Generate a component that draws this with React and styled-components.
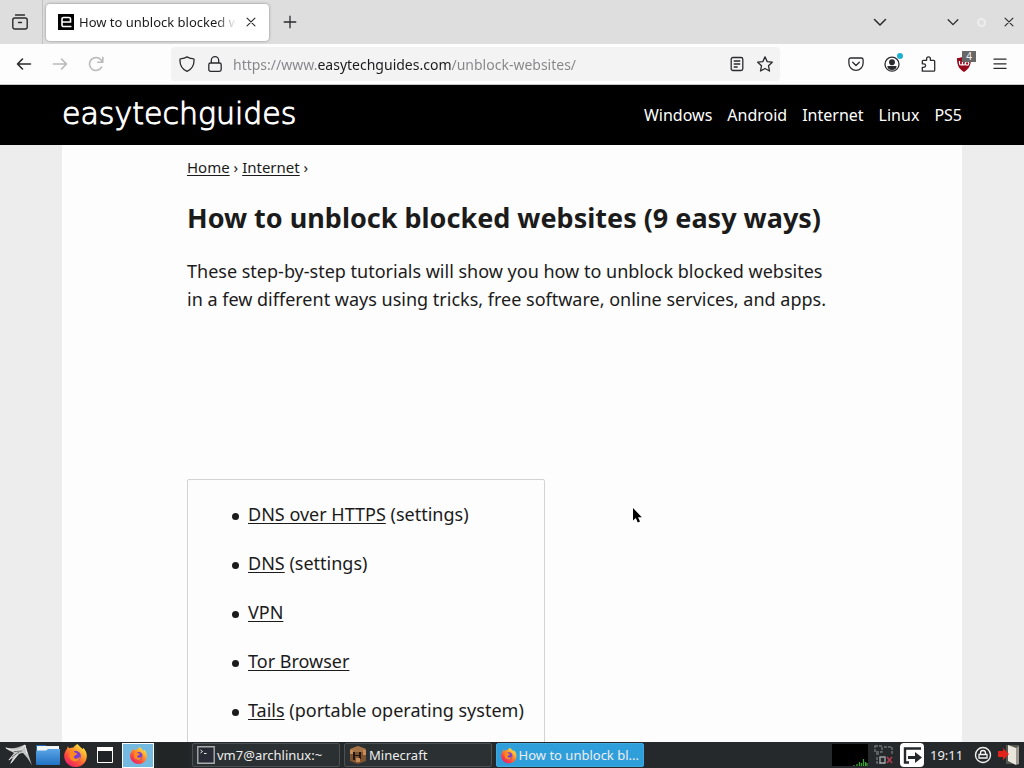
import styled, { createGlobalStyle, css } from "styled-components";

const GlobalStyle = createGlobalStyle`
  *, *::before, *::after {
    box-sizing: border-box;
  }

  body {
    margin: 0;
    overflow: hidden;
    font-family: "Noto Sans", sans-serif;
    color: #1b1b1b;
    background: #fdfdfd;
  }

  button, input {
    font-family: inherit;
    color: inherit;
  }
`;

const navLinks = ["Windows", "Android", "Internet", "Linux", "PS5"];

const guides = [
  { name: "DNS over HTTPS", note: "(settings)" },
  { name: "DNS", note: "(settings)" },
  { name: "VPN" },
  { name: "Tor Browser" },
  { name: "Tails", note: "(portable operating system)" },
];

/* ---------- icons ---------- */

const Line = ({ size = 16, width = 1.3, children }) => (
  <svg
    width={size}
    height={size}
    viewBox="0 0 16 16"
    fill="none"
    stroke="currentColor"
    strokeWidth={width}
    strokeLinecap="round"
    strokeLinejoin="round"
    aria-hidden="true"
  >
    {children}
  </svg>
);

const ViewIcon = () => (
  <Line width={1.4}>
    <path d="M3.5 1h9" />
    <path d="M2.8 4h10.4c1.200 0 2 .8 2 2v7c0 1.200-.8 2-2 2H2.800c-1.200 0-2-.8-2-2V6c0-1.200.8-2 2-2zM6.500 8.500h3" />
  </Line>
);
const CloseIcon = ({ size = 14 }) => (
  <Line size={size}>
    <path d="M3.500 3.500l9 9M12.500 3.500l-9 9" />
  </Line>
);
const PlusIcon = () => (
  <Line>
    <path d="M8 2.200v11.600M2.200 8h11.600" />
  </Line>
);
const ChevronIcon = ({ size = 16 }) => (
  <Line size={size} width={1.5}>
    <path d="M2.500 5.500L8 11l5.500-5.500" />
  </Line>
);
const BackIcon = () => (
  <Line width={1.6}>
    <path d="M14.500 8h-13M6.500 3l-5 5 5 5" />
  </Line>
);
const ForwardIcon = () => (
  <Line width={1.6}>
    <path d="M1.500 8h13M9.500 3l5 5-5 5" />
  </Line>
);
const ReloadIcon = () => (
  <Line width={1.6}>
    <path d="M13.600 11.200A6.500 6.500 0 1 1 13.200 4.100L14.500 5.800M14.800 1.200v5H9.800" />
  </Line>
);
const ShieldIcon = () => (
  <Line>
    <path d="M8 .9C6 2.200 3.700 2.600 1.500 2.900 1 3 .9 3.300.9 3.700c0 5.200 2 9.500 7.100 11.600 5.100-2.100 7.100-6.400 7.100-11.600 0-.4-.1-.7-.6-.8C12.300 2.600 10 2.200 8 .9z" />
  </Line>
);
const LockIcon = () => (
  <Line>
    <path d="M4.300 7V4.400a3.700 3.700 0 0 1 7.400 0V7M3.600 7h8.800c1 0 1.800.8 1.800 1.800v4.700c0 1-.8 1.800-1.800 1.800H3.600c-1 0-1.800-.8-1.800-1.800V8.800C1.800 7.800 2.600 7 3.600 7z" />
  </Line>
);
const ReaderIcon = () => (
  <Line>
    <rect x="2.200" y="1.500" width="11.600" height="13" rx="1.800" />
    <path d="M5.200 5h5.600M5.200 8h5.600M5.200 11h3" />
  </Line>
);
const StarIcon = () => (
  <Line>
    <path d="M8 .9l2.200 4.700 5.100.6-3.800 3.600 1 5.200L8 12.500 3.500 15l1-5.200L.7 6.200l5.100-.6z" />
  </Line>
);
const PocketIcon = () => (
  <Line>
    <path d="M2.700 2h10.600c1 0 1.800.8 1.800 1.800v3.400a7.100 7.100 0 0 1-14.200 0V3.800C.9 2.800 1.700 2 2.700 2zM4.700 6.300L8 9.500l3.300-3.200" />
  </Line>
);
const AccountIcon = () => (
  <Line>
    <circle cx="8" cy="8.200" r="7" />
    <circle cx="8" cy="6.300" r="2.300" fill="currentColor" />
    <path d="M4 10.600h8c-.4 1.600-2 2.700-4 2.700s-3.600-1.100-4-2.700z" fill="currentColor" />
  </Line>
);
const PuzzleIcon = () => (
  <Line>
    <path d="M2.300 15.200V11.400h1.500a1.800 1.800 0 0 0 0-3.600H2.300V5.300c0-.6.400-1 1-1h3.300V2.800a1.900 1.900 0 0 1 3.800 0v1.500h3.300c.6 0 1 .4 1 1v8.900c0 .6-.4 1-1 1H2.300z" />
  </Line>
);
const UblockIcon = () => (
  <svg width="16" height="16" viewBox="0 0 16 16" aria-hidden="true">
    <path d="M8 0C6 1.500 3.500 2 1 2c0 7 1.500 10.500 7 14 5.500-3.500 7-7 7-14-2.500 0-5-.5-7-2z" fill="#960a1c" />
    <path d="M3.500 5v2.500c0 2 3 2 3 0V5v2.500c0 2 3 2 3 0V5" fill="none" stroke="#fff" strokeWidth="1.200" />
    <circle cx="11" cy="7.400" r="1.800" fill="none" stroke="#fff" strokeWidth="1.200" />
  </svg>
);
const MenuIcon = () => (
  <Line>
    <path d="M2 3.200h12M2 7.800h12M2 12.400h12" />
  </Line>
);
const SiteIcon = () => (
  <svg width="16" height="16" viewBox="0 0 16 16" aria-hidden="true">
    <path d="M0 0h16v16H0z" fill="#000" />
    <path d="M13.500 12.500H5.500a1.500 1.500 0 0 1-1.500-1.500V5a1.500 1.500 0 0 1 1.500-1.500h5.500A1.500 1.500 0 0 1 12.500 5V8H4" fill="none" stroke="#fff" strokeWidth="1.600" />
  </svg>
);

const FirefoxIcon = ({ size }) => (
  <svg width={size} height={size} viewBox="0 0 24 24" aria-hidden="true">
    <defs>
      <linearGradient id="fox" x1="0.850" y1="0.100" x2="0.200" y2="0.950">
        <stop offset="0" stopColor="#ffe543" />
        <stop offset="0.350" stopColor="#ff9a2a" />
        <stop offset="0.700" stopColor="#ff4a3c" />
        <stop offset="1" stopColor="#e6216e" />
      </linearGradient>
    </defs>
    <path
      d="M14 0c1.500 2 4 3.500 5.500 5.500l.5-1.500c2.500 2.500 4 5.500 3.800 9C23.500 19.500 18.500 24 12 24S.3 19 .2 12.800C.1 9.500 1.500 7 3.200 5l.5-2.500 2 2C7 3.800 8.500 3.500 10 3.600 11 2 12.500.8 14 0z"
      fill="url(#fox)"
    />
    <circle cx="12" cy="12.600" r="5.600" fill="#7a3fd0" />
    <path d="M6 7c2-.8 4-.3 5 1.500 1 .8 2.500.8 3 1.500-.5 1.500-2.500 1.500-3.500 2.700-.8 1.500.5 3 3 2.500 2-.4 3-1.500 3.500-3-.2 4-3 6.300-6 6-4-.4-6.500-4-5-8.200z" fill="#ff8a1f" />
  </svg>
);
const LauncherIcon = () => (
  <svg width="30" height="24" viewBox="0 0 30 24" aria-hidden="true">
    <path d="M1 4.500C9 6 14 5 21 1.500c2 6 4.500 13 7 21-2.500-5-5.500-9-9-12.500-3 0-5 1.500-6.500 4L6 21.500l3-7.500-5 3.500 6-7.500C7 8.500 4 7 1 4.500z" fill="#c3c5c5" />
    <path d="M2 5c5 2.500 10 3 15 1.500L21 2l2 9M5 17l9-7.500M7 20l7-9" fill="none" stroke="#f0f0f0" strokeWidth="1" />
    <path d="M8 14l7-5M10 8.500l8-.5" fill="none" stroke="#5f6465" strokeWidth="0.900" />
  </svg>
);
const FolderIcon = () => (
  <svg width="24" height="22" viewBox="0 0 24 22" aria-hidden="true">
    <defs>
      <linearGradient id="folder" x1="0" y1="0" x2="0" y2="1">
        <stop offset="0" stopColor="#5aa5e6" />
        <stop offset="1" stopColor="#2272c4" />
      </linearGradient>
    </defs>
    <path d="M0 1h9l2 1h12v4H0z" fill="#1d68b3" />
    <path d="M1 2h22v6H1z" fill="#f2f6f8" />
    <path d="M0 6.500h10l2-1.500h12V20a1 1 0 0 1-1 1H1a1 1 0 0 1-1-1z" fill="url(#folder)" />
  </svg>
);
const DesktopIcon = () => (
  <svg width="16" height="16" viewBox="0 0 16 16" aria-hidden="true">
    <path d="M.5.5h15v15H.5z" fill="#1f2325" stroke="#fff" />
    <path d="M0 0h16v4H0z" fill="#fff" />
  </svg>
);
const TerminalIcon = () => (
  <svg width="18" height="18" viewBox="0 0 18 18" aria-hidden="true">
    <path d="M.8.8h16.400v16.400H.8z" fill="#282b35" stroke="#a8acae" strokeWidth="1.400" />
    <path d="M3.500 4l2 1.500-2 1.500M7 7.500h2.500" fill="none" stroke="#e8e8e8" />
  </svg>
);
const MinecraftIcon = () => (
  <svg width="18" height="18" viewBox="0 0 18 18" aria-hidden="true">
    <path d="M1 3l8-3 8 3v12l-8 3-8-3z" fill="#7d5331" />
    <path d="M1 3l8-3 8 3-2 3H3z" fill="#a47448" />
    <path d="M4 6h2v3h4V6h2v7h-2v-3H6v4H4z" fill="#20150f" />
    <path d="M1 4h3v4H1zM14 4h3v5h-3zM7 12h4v4H7z" fill="#c58c58" />
  </svg>
);
const CpuGraph = () => (
  <svg width="36" height="22" viewBox="0 0 36 22" aria-hidden="true">
    <path d="M0 0h36v22H0z" fill="#000" />
    <path d="M22 22v-1M25 22v-2M27.500 22v-4M29.500 22v-3M31.500 22v-7M33.500 22v-4M35 22v-3" stroke="#3aa535" strokeWidth="1.300" />
  </svg>
);
const NetworkIcon = () => (
  <svg width="20" height="20" viewBox="0 0 20 20" aria-hidden="true">
    <g fill="none" stroke="#6d7375" strokeWidth="1.400">
      <path d="M1 1h7v6H1zM2 9h4M3 12v6h8M10 2h8v8" strokeDasharray="3 1" />
      <path d="M6 12h5v6H6z" stroke="#9ca1a2" />
    </g>
    <path d="M13 12l5 6M18 12l-5 6" stroke="#b43a50" strokeWidth="1.600" />
  </svg>
);
const RemoteIcon = () => (
  <svg width="24" height="24" viewBox="0 0 24 24" aria-hidden="true">
    <rect width="24" height="24" rx="4" fill="#fff" />
    <path d="M21 5.500H5v14h4" fill="none" stroke="#25292b" strokeWidth="2.400" />
    <path d="M8 13h7V9l7 5.500-7 5.500v-4H8z" fill="#25292b" />
  </svg>
);
const ScreenLockIcon = () => (
  <svg width="18" height="18" viewBox="0 0 18 18" fill="none" stroke="#f2f2f2" aria-hidden="true">
    <circle cx="9" cy="9" r="7.500" strokeWidth="1.400" />
    <path d="M5 8.500h8v3.500H5zM6.500 8.500V7a2.500 2.500 0 0 1 5 0v1.500" strokeWidth="1.300" />
  </svg>
);
const ExitIcon = () => (
  <svg width="22" height="22" viewBox="0 0 22 22" aria-hidden="true">
    <path d="M8 1h13v19H8z" fill="#56584f" />
    <path d="M10 1l8 3v17l-8-4z" fill="#e8e6dd" />
    <path d="M18 4l3-2v18l-3 1z" fill="#9b998f" />
    <path d="M0 7h5V4l6 6-6 6v-3H0z" fill="#e2231a" />
  </svg>
);

/* ---------- browser chrome ---------- */

const Screen = styled.div`
  display: flex;
  flex-direction: column;
  height: 100vh;
`;

const TabStrip = styled.header`
  display: flex;
  align-items: center;
  height: 44px;
  flex: none;
  padding: 0 1px 0 4px;
  background: #dedede;
`;

const IconButton = styled.button`
  position: relative;
  display: grid;
  place-items: center;
  flex: none;
  width: ${({ $w }) => $w || 32}px;
  height: 32px;
  padding: 0;
  border: 0;
  background: none;
  color: ${({ $dim }) => ($dim ? "#b9b9b9" : "#2b2b2e")};
`;

const Divider = styled.span`
  width: 1px;
  height: 44px;
  margin: 0 3px 0 6px;
  background: #c2c2c2;
`;

const Tab = styled.div`
  display: flex;
  align-items: center;
  gap: 5px;
  width: 223px;
  height: 37px;
  padding: 0 8px 0 12px;
  border-radius: 4px;
  background: #fff;
  box-shadow: 0 0 3px rgba(0, 0, 0, 0.4);
`;

const TabTitle = styled.span`
  flex: 1;
  overflow: hidden;
  white-space: nowrap;
  font-size: 13px;
  mask-image: linear-gradient(to left, transparent, #000 20px);
`;

const WindowButtons = styled.div`
  display: flex;
  margin-left: 29px;
`;

const Spacer = styled.span`
  flex: 1;
`;

const Maximize = styled.span`
  width: 9px;
  height: 9px;
  border: 2px solid #ededed;
  border-radius: 50%;
`;

const Toolbar = styled.div`
  display: flex;
  align-items: center;
  gap: 4px;
  flex: none;
  height: 41px;
  padding: 0 8px;
  border-bottom: 1px solid #c8c8c8;
  background: #fdfdfd;
`;

const AddressBar = styled.div`
  display: flex;
  align-items: center;
  flex: 1;
  height: 34px;
  margin: 0 56px 0 55px;
  padding: 0 1px 0 2px;
  border-radius: 4px;
  background: #f3f3f4;
`;

/* the host name stands out from the rest of the address */
const Url = styled.input`
  flex: 1;
  min-width: 0;
  height: 28px;
  margin-left: 4px;
  padding: 0;
  border: 0;
  outline: 0;
  font-size: 14px;
  color: transparent;
  background: linear-gradient(to right, #858588 84px, #1c1c1e 84px 218px, #858588 218px);
  background-clip: text;
`;

const Dot = styled.span`
  position: absolute;
  top: 5px;
  right: 5px;
  width: 6px;
  height: 6px;
  border-radius: 50%;
  background: #1eb0d0;
`;

const Count = styled.span`
  position: absolute;
  top: 3px;
  right: 4px;
  width: 14px;
  height: 11px;
  background: #676767;
  color: #f4f4f4;
  font-size: 10px;
  line-height: 11px;
  text-align: center;
`;

/* ---------- web page ---------- */

const Page = styled.div`
  flex: 1;
  min-height: 0;
  overflow: hidden;
  background: #ededed;
`;

const SiteHeader = styled.div`
  height: 60px;
  padding: 0 62px;
  background: #000;
`;

const SiteHeaderInner = styled.div`
  display: flex;
  align-items: center;
  justify-content: space-between;
  max-width: 900px;
  height: 60px;
  margin: 0 auto;
`;

const Logo = styled.a`
  color: #fff;
  font-family: "DejaVu Sans", sans-serif;
  font-size: 30px;
  font-weight: 200;
  line-height: 58px;
  height: 60px;
  text-decoration: none;
  -webkit-text-stroke: 1px #fff;
`;

const SiteNav = styled.nav`
  display: flex;
  gap: 15px;

  a {
    color: #fff;
    font-size: 16px;
    text-decoration: none;
  }
`;

const Content = styled.main`
  max-width: 900px;
  min-height: 100%;
  margin: 0 auto;
  padding: 10px 125px 0;
  background: #fdfdfd;
`;

const Breadcrumbs = styled.nav`
  font-size: 15px;
  line-height: 24px;
`;

const PageLink = styled.a`
  color: inherit;
  text-decoration: underline;
  text-decoration-thickness: 1px;
  text-underline-offset: 2px;
`;

const Title = styled.h1`
  margin: 21px 0;
  font-size: 27px;
  line-height: 36px;
  white-space: nowrap;
`;

const Intro = styled.p`
  margin: 0 0 166px;
  font-size: 18px;
  line-height: 28px;
`;

const Contents = styled.div`
  width: fit-content;
  padding: 20px;
  border: 1px solid #d3d3d3;
  border-radius: 2px;
`;

const GuideList = styled.ul`
  display: grid;
  gap: 21px;
  margin: 0;
  padding: 0 0 0 40px;
  font-size: 18px;
  line-height: 28px;
  list-style: none;

  li::before {
    content: "";
    display: inline-block;
    width: 7px;
    height: 7px;
    margin: 0 9px 0 -16px;
    border-radius: 50%;
    background: currentColor;
    vertical-align: middle;
  }
`;

/* ---------- desktop panel ---------- */

const Panel = styled.footer`
  display: flex;
  align-items: center;
  flex: none;
  height: 26px;
  padding: 0 4px;
  background: #25292b;
  color: #eee;
`;

const PanelButton = styled.button`
  display: grid;
  place-items: center;
  flex: none;
  width: ${({ $w }) => $w}px;
  height: 26px;
  padding: 0;
  border: 0;
  background: none;
`;

const Workspace = styled.button`
  display: grid;
  place-items: center;
  width: 32px;
  height: 25px;
  margin-right: 3px;
  padding: 0;
  border: 0;
  background: #222526;

  ${({ $active }) =>
    $active &&
    css`
      border: 1px solid #fff;
      background: #74b9e0;
    `}
`;

const Tasks = styled.div`
  display: flex;
  gap: 4px;
  flex: 1;
`;

const Task = styled.button`
  display: flex;
  align-items: center;
  gap: 2px;
  width: 148px;
  height: 24px;
  padding: 0 4px;
  border: 1px solid ${({ $active }) => ($active ? "#3fa9e0" : "#4c5254")};
  border-radius: 2px;
  background: ${({ $active }) => ($active ? "#2f9fdc" : "#2b3032")};
  color: #eee;
  font-size: 13px;
  white-space: nowrap;
`;

const Tray = styled.div`
  display: flex;
  align-items: center;
  gap: 6px;
`;

const Clock = styled.time`
  width: 38px;
  font-size: 13px;
`;

const Pointer = styled.svg`
  position: absolute;
  left: 632px;
  top: 507px;
`;

const App = () => {
  return (
    <Screen>
      <GlobalStyle />

      <TabStrip>
        <IconButton aria-label="View recent browsing"><ViewIcon /></IconButton>
        <Divider />
        <Tab>
          <SiteIcon />
          <TabTitle>How to unblock blocked websites</TabTitle>
          <IconButton $w={20} aria-label="Close tab"><CloseIcon /></IconButton>
        </Tab>
        <IconButton $w={42} aria-label="New tab"><PlusIcon /></IconButton>
        <Spacer />
        <IconButton $w={60} aria-label="List all tabs"><ChevronIcon /></IconButton>
        <WindowButtons>
          <IconButton $w={28} aria-label="Minimize"><ChevronIcon size={14} /></IconButton>
          <IconButton $w={28} aria-label="Maximize"><Maximize /></IconButton>
          <IconButton $w={28} aria-label="Close"><CloseIcon /></IconButton>
        </WindowButtons>
      </TabStrip>

      <Toolbar>
        <IconButton aria-label="Back"><BackIcon /></IconButton>
        <IconButton $dim aria-label="Forward"><ForwardIcon /></IconButton>
        <IconButton $dim aria-label="Reload"><ReloadIcon /></IconButton>
        <AddressBar>
          <IconButton $w={28} aria-label="Tracking protection"><ShieldIcon /></IconButton>
          <IconButton $w={28} aria-label="Site security"><LockIcon /></IconButton>
          <Url aria-label="Address" defaultValue="https://www.easytechguides.com/unblock-websites/" />
          <IconButton $w={28} aria-label="Reader view"><ReaderIcon /></IconButton>
          <IconButton $w={28} aria-label="Bookmark this page"><StarIcon /></IconButton>
        </AddressBar>
        <IconButton aria-label="Save to Pocket"><PocketIcon /></IconButton>
        <IconButton aria-label="Account"><AccountIcon /><Dot /></IconButton>
        <IconButton aria-label="Extensions"><PuzzleIcon /></IconButton>
        <IconButton aria-label="uBlock"><UblockIcon /><Count>4</Count></IconButton>
        <IconButton aria-label="Menu"><MenuIcon /></IconButton>
      </Toolbar>

      <Page>
        <SiteHeader>
          <SiteHeaderInner>
            <Logo href="#">easytechguides</Logo>
            <SiteNav>
              {navLinks.map((link) => (
                <a href="#" key={link}>{link}</a>
              ))}
            </SiteNav>
          </SiteHeaderInner>
        </SiteHeader>
        <Content>
          <Breadcrumbs>
            <PageLink href="#">Home</PageLink> › <PageLink href="#">Internet</PageLink> ›
          </Breadcrumbs>
          <Title>How to unblock blocked websites (9 easy ways)</Title>
          <Intro>
            These step-by-step tutorials will show you how to unblock blocked websites in a few
            different ways using tricks, free software, online services, and apps.
          </Intro>
          <Contents>
            <GuideList>
              {guides.map(({ name, note }) => (
                <li key={name}>
                  <PageLink href="#">{name}</PageLink> {note}
                </li>
              ))}
            </GuideList>
          </Contents>
        </Content>
      </Page>

      <Panel>
        <PanelButton $w={30} aria-label="Applications"><LauncherIcon /></PanelButton>
        <PanelButton $w={28} aria-label="Files"><FolderIcon /></PanelButton>
        <PanelButton $w={26} aria-label="Firefox"><FirefoxIcon size={23} /></PanelButton>
        <PanelButton $w={34} aria-label="Show desktop"><DesktopIcon /></PanelButton>
        <Workspace $active aria-label="Workspace 1"><FirefoxIcon size={17} /></Workspace>
        <Workspace aria-label="Workspace 2" />
        <Tasks>
          <Task><TerminalIcon />vm7@archlinux:~</Task>
          <Task><MinecraftIcon />Minecraft</Task>
          <Task $active><FirefoxIcon size={17} />How to unblock bl...</Task>
        </Tasks>
        <Tray>
          <CpuGraph />
          <NetworkIcon />
          <RemoteIcon />
          <Clock>19:11</Clock>
          <ScreenLockIcon />
          <ExitIcon />
        </Tray>
      </Panel>

      <Pointer width="12" height="18" viewBox="0 0 12 18" aria-hidden="true">
        <path d="M1 1v12.500l2.800-2.400 2 4.400 2.200-1-2-4.300h3.800z" fill="#000" />
      </Pointer>
    </Screen>
  );
};

export default App;
